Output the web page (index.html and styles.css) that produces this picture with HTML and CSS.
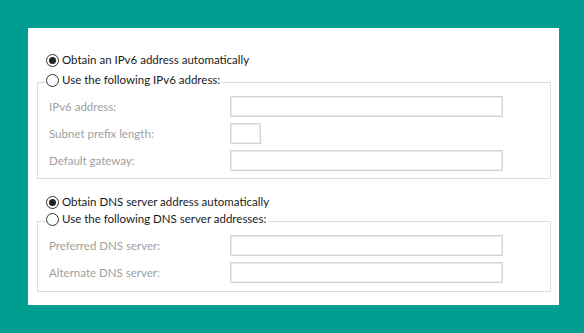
FILE: index.html
```html
<!DOCTYPE html>
<html lang="en">
<head>
    <meta charset="UTF-8">
    <title>IPv6 Properties</title>
    <link rel="stylesheet" href="styles.css">
</head>
<body>
    <div class="panel">
        <label class="radio-row">
            <input type="radio" name="ip" checked>
            <span>Obtain an IPv6 address automatically</span>
        </label>
        <fieldset class="group">
            <legend>
                <label class="radio-row">
                    <input type="radio" name="ip">
                    <span>Use the following IPv6 address:</span>
                </label>
            </legend>
            <div class="field">
                <span class="field-label">IPv6 address:</span>
                <span class="box"></span>
            </div>
            <div class="field">
                <span class="field-label">Subnet prefix length:</span>
                <span class="box box-small"></span>
            </div>
            <div class="field">
                <span class="field-label">Default gateway:</span>
                <span class="box"></span>
            </div>
        </fieldset>

        <label class="radio-row radio-dns">
            <input type="radio" name="dns" checked>
            <span>Obtain DNS server address automatically</span>
        </label>
        <fieldset class="group group-dns">
            <legend>
                <label class="radio-row">
                    <input type="radio" name="dns">
                    <span>Use the following DNS server addresses:</span>
                </label>
            </legend>
            <div class="field">
                <span class="field-label">Preferred DNS server:</span>
                <span class="box"></span>
            </div>
            <div class="field">
                <span class="field-label">Alternate DNS server:</span>
                <span class="box"></span>
            </div>
        </fieldset>
    </div>
</body>
</html>
```

FILE: styles.css
```css
:root {
    --teal: #009e90; --text-color: #1a1a1a; --muted: #a0a0a0;
    --group-border: #dcdcdc; --box-border: #d4d4d4;
}
body { margin: 0; background-color: var(--teal); font-family: 'Lato', 'Noto Sans', sans-serif; font-size: 11.5px; color: var(--text-color); }
.panel { box-sizing: border-box; margin: 28px 0 0 28px; width: 531px; height: 277px; background-color: #fff; padding: 24px 8px 0 9px; }
.radio-row { display: flex; align-items: center; gap: 3px; height: 16px; line-height: 16px; margin-left: 9px; }
.radio-row input { appearance: none; margin: 0; width: 13px; height: 13px; border: 1px solid #333; border-radius: 50%; box-sizing: border-box; display: grid; place-items: center; background: #fff; }
.radio-row input:checked::after { content: ''; width: 7px; height: 7px; border-radius: 50%; background-color: #222; }
.group { margin: 4px 0 0; border: 1px solid var(--group-border); padding: 4px 7px 7px 11px; }
.group legend { padding: 0 2px 4px 0; margin-left: -3px; }
.group legend .radio-row { margin-left: 0; }
.group-dns { margin-top: 1px; padding-bottom: 8px; }
.field { display: flex; align-items: center; height: 21px; }
.field + .field { margin-top: 6px; }
.field-label { width: 181px; color: var(--muted); }
.box { box-sizing: border-box; width: 273px; height: 21px; border: 1px solid var(--box-border); box-shadow: inset 0 0 0 1px #ececec; }
.box-small { width: 31px; }
.radio-dns { margin-top: 15px; }
```
